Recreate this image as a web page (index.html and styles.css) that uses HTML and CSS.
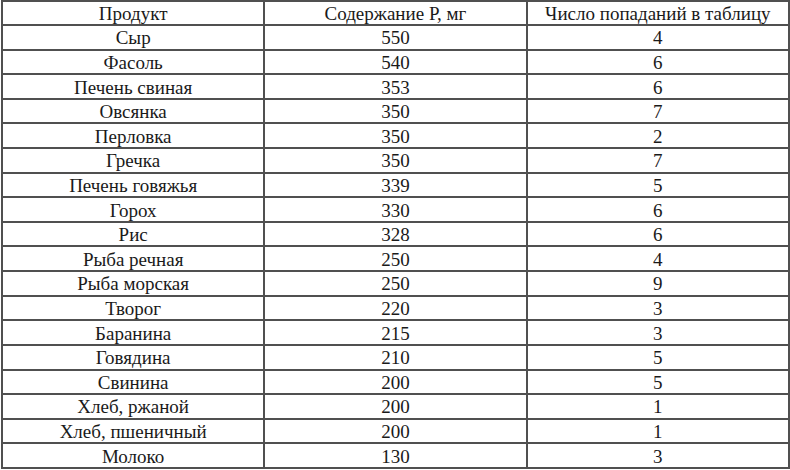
FILE: index.html
```html
<!DOCTYPE html>
<html lang="ru">
<head>
<meta charset="utf-8">
<link rel="stylesheet" href="styles.css">
</head>
<body>
<table class="data">
<thead>
<tr><th>Продукт</th><th>Содержание Р, мг</th><th>Число попаданий в таблицу</th></tr>
</thead>
<tbody>
<tr><td>Сыр</td><td>550</td><td>4</td></tr>
<tr><td>Фасоль</td><td>540</td><td>6</td></tr>
<tr><td>Печень свиная</td><td>353</td><td>6</td></tr>
<tr><td>Овсянка</td><td>350</td><td>7</td></tr>
<tr><td>Перловка</td><td>350</td><td>2</td></tr>
<tr><td>Гречка</td><td>350</td><td>7</td></tr>
<tr><td>Печень говяжья</td><td>339</td><td>5</td></tr>
<tr><td>Горох</td><td>330</td><td>6</td></tr>
<tr><td>Рис</td><td>328</td><td>6</td></tr>
<tr><td>Рыба речная</td><td>250</td><td>4</td></tr>
<tr><td>Рыба морская</td><td>250</td><td>9</td></tr>
<tr><td>Творог</td><td>220</td><td>3</td></tr>
<tr><td>Баранина</td><td>215</td><td>3</td></tr>
<tr><td>Говядина</td><td>210</td><td>5</td></tr>
<tr><td>Свинина</td><td>200</td><td>5</td></tr>
<tr><td>Хлеб, ржаной</td><td>200</td><td>1</td></tr>
<tr><td>Хлеб, пшеничный</td><td>200</td><td>1</td></tr>
<tr><td>Молоко</td><td>130</td><td>3</td></tr>
</tbody>
</table>
</body>
</html>
```
FILE: styles.css
```css
html, body {
  margin: 0;
  padding: 0;
  background: #ffffff;
}
body {
  padding: 0 0 0 1px;
  font-family: "Liberation Serif", serif;
}
.data {
  border-collapse: collapse;
  width: 789px;
  height: 469px;
  table-layout: fixed;
  color: #1a1a1a;
  font-family: "Liberation Serif", serif;
}
.data th,
.data td {
  font-family: "Liberation Serif", serif;
  font-size: 19px;
  border: 2px solid #505050;
  padding: 2px 0 0 0;
  text-align: center;
  vertical-align: middle;
  font-weight: normal;
  line-height: 20px;
}
```
